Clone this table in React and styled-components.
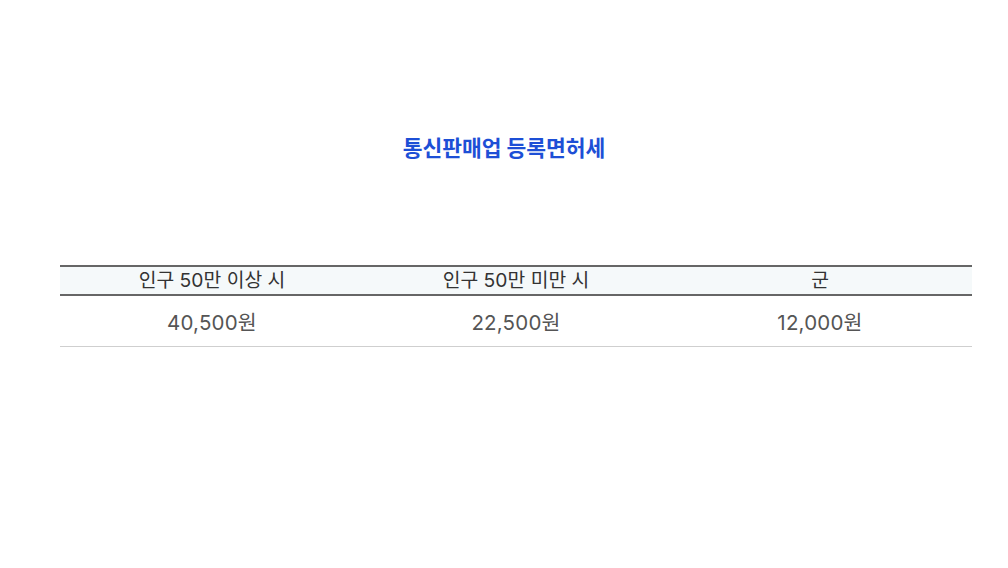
import React from "react";
import styled, { createGlobalStyle } from "styled-components";

const Global = createGlobalStyle`
  html, body { margin: 0; padding: 0; background: #fff; }
  body { font-family: "Noto Sans CJK KR", "Noto Sans", sans-serif; }
`;

const Page = styled.div`
  width: 1008px;
  height: 568px;
  box-sizing: border-box;
  padding: 132px 36px 0 60px;
  display: flex;
  flex-direction: column;
`;

const Title = styled.h2`
  margin: 0 0 0 -24px;
  text-align: center;
  font-size: 21.5px;
  line-height: 30px;
  font-weight: 700;
  color: #1d4fd6;
`;

const Table = styled.table`
  margin-top: 103px;
  width: 912px;
  border-collapse: collapse;
  table-layout: fixed;
  font-family: Inter, "Noto Sans CJK KR", sans-serif;
`;

const Th = styled.th`
  background: #f5f9fa;
  border-top: 2px solid #666;
  border-bottom: 2px solid #666;
  height: 27px;
  padding: 0;
  font-size: 19.3px;
  font-weight: 400;
  color: #333;
  text-align: center;
  line-height: 27px;
`;

const Td = styled.td`
  border-bottom: 1px solid #cfcfcf;
  height: 50px;
  padding: 0;
  font-size: 20.5px;
  letter-spacing: 0.2px;
  font-weight: 400;
  color: #555;
  text-align: center;
`;

const headers = ["인구 50만 이상 시", "인구 50만 미만 시", "군"];
const values = ["40,500원", "22,500원", "12,000원"];

export default function App() {
  return (
    <>
      <Global />
      <Page>
        <Title>통신판매업 등록면허세</Title>
        <Table>
          <thead>
            <tr>
              {headers.map((h) => (
                <Th key={h}>{h}</Th>
              ))}
            </tr>
          </thead>
          <tbody>
            <tr>
              {values.map((v) => (
                <Td key={v}>{v}</Td>
              ))}
            </tr>
          </tbody>
        </Table>
      </Page>
    </>
  );
}
